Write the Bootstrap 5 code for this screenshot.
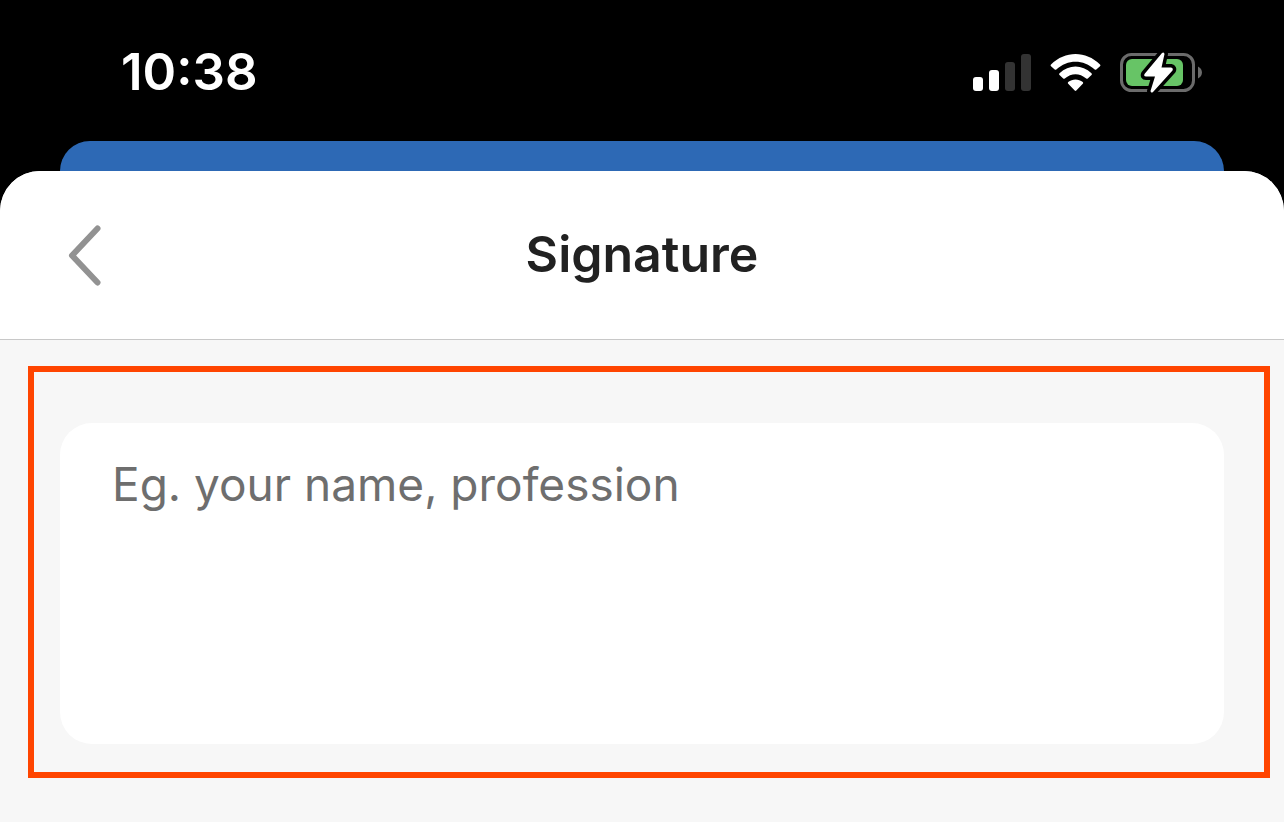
<!DOCTYPE html>
<html lang="en">
<head>
<meta charset="utf-8">
<meta name="viewport" content="width=device-width, initial-scale=1">
<title>Signature</title>
<link href="https://cdn.jsdelivr.net/npm/bootstrap@5.3.0/dist/css/bootstrap.min.css" rel="stylesheet">
<style>
  body { font-family: Inter, "Liberation Sans", sans-serif; background: #000; }
  .status-bar { padding: 42px 82px 39px 121px; color: #fff; }
  .clock { font-size: 51px; line-height: 60px; font-weight: 600; }
  .behind-sheet { height: 30px; margin: 0 60px; background: #2d69b5; border-radius: 32px 32px 0 0; }
  .sheet { background: #f7f7f7; border-radius: 40px 40px 0 0; overflow: hidden; }
  .sheet-header { display: grid; grid-template-columns: 1fr auto 1fr; padding: 48px 60px; background: #fff; border-bottom: 1px solid #c8c8c8; }
  .sheet-title { font-size: 50px; line-height: 70px; font-weight: 600; color: #212121; padding-bottom: 2px; }
  .back-btn { justify-self: start; }
  .sheet-body { padding: 26px 14px 44px 28px; }
  .highlight-frame { border: 6px solid #ff4500; padding: 51px 40px 28px 26px; }
  .signature-input, .signature-input:focus { height: 321px; padding: 31px 52px; border: 0; border-radius: 32px; background: #fff; font-size: 46px; line-height: 60px; resize: none; box-shadow: none; }
  .signature-input::placeholder { color: #6e6e6e; opacity: 1; }
</style>
</head>
<body class="min-vh-100 d-flex flex-column">
<div class="status-bar d-flex justify-content-between align-items-center">
  <time class="clock">10:38</time>
  <div class="d-flex align-items-center">
    <svg width="232" height="44" viewBox="970 50 232 44" role="img" aria-label="Signal, Wi-Fi and battery charging">
      <!-- cellular signal -->
      <g fill="#fff">
        <rect x="973" y="77" width="10" height="14" rx="3"/>
        <rect x="989" y="70" width="10" height="21" rx="3"/>
      </g>
      <g fill="#333">
        <rect x="1005" y="62" width="10" height="29" rx="3"/>
        <rect x="1021" y="54" width="10" height="37" rx="3"/>
      </g>
      <!-- wifi -->
      <g fill="#fff">
        <path d="M1051 64.500C1065 50.500 1086 50.500 1100 64.500Q1101 65.300 1100 66.200L1096.300 69.500Q1095.500 70.200 1094.700 69.500C1083.500 59 1067.500 59 1056.300 69.500Q1055.500 70.200 1054.700 69.500L1051 66.200Q1050 65.300 1051 64.500Z"/>
        <path d="M1059.500 73.200C1069 64.300 1082 64.300 1091.500 73.200Q1092.400 74.100 1091.500 75L1087.800 78.500Q1087 79.200 1086.200 78.500C1079.500 72.700 1071.500 72.700 1064.800 78.500Q1064 79.200 1063.200 78.500L1059.500 75Q1058.600 74.100 1059.500 73.200Z"/>
        <path d="M1068.200 82C1072.500 78.600 1078.500 78.600 1082.800 82Q1083.700 82.900 1082.800 83.800L1076.300 90.500Q1075.500 91.300 1074.700 90.500L1068.200 83.800Q1067.300 82.900 1068.200 82Z"/>
      </g>
      <!-- battery -->
      <rect x="1121.500" y="54.500" width="72" height="36" rx="10" fill="none" stroke="#6b6b6b" stroke-width="3"/>
      <path d="M1198 66.500C1203.300 69 1203.300 76 1198 78.500Z" fill="#6b6b6b"/>
      <rect x="1126" y="59" width="57" height="27" rx="6" fill="#67c466"/>
      <path d="M1162 53L1144.500 74Q1143.500 76.500 1146 76.500H1155L1150.500 91Q1151 93.500 1153 92L1172.500 70.500Q1173.500 68 1171 67.500H1161.500L1164.500 54Q1164 51.500 1162 53Z" fill="#fff" stroke="#000" stroke-width="7" stroke-linejoin="round" paint-order="stroke"/>
    </svg>
  </div>
</div>
<div class="behind-sheet"></div>
<div class="sheet flex-grow-1">
  <header class="sheet-header align-items-center">
    <button type="button" class="back-btn btn p-0 border-0 d-flex" aria-label="Back">
      <svg width="50" height="70" viewBox="60 220 50 70" fill="none" stroke="#929292" stroke-width="6" stroke-linecap="round" stroke-linejoin="round"><path d="M97.500 228.500L72 255.500L97.500 282.500"/></svg>
    </button>
    <h1 class="sheet-title m-0">Signature</h1>
  </header>
  <main class="sheet-body">
    <div class="highlight-frame">
      <textarea class="signature-input form-control" aria-label="Signature" placeholder="Eg. your name, profession"></textarea>
    </div>
  </main>
</div>
<script src="https://cdn.jsdelivr.net/npm/bootstrap@5.3.0/dist/js/bootstrap.bundle.min.js"></script>
</body>
</html>
